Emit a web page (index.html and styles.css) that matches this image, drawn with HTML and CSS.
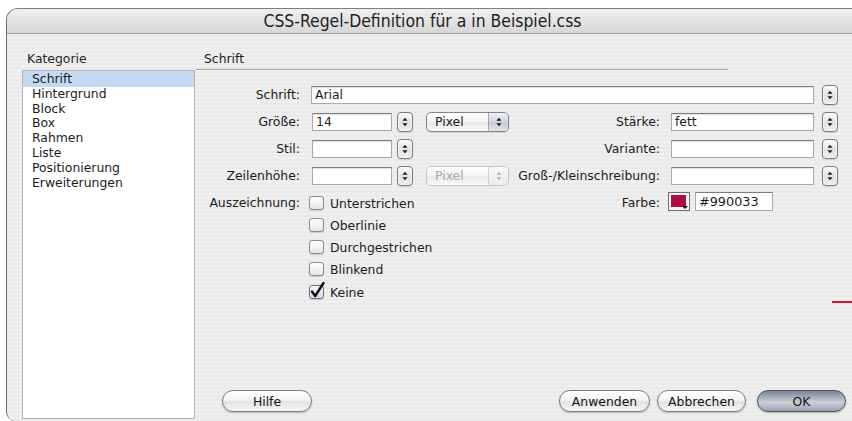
FILE: index.html
```html
<!DOCTYPE html>
<html lang="de">
<head>
<meta charset="utf-8">
<title>CSS-Regel-Definition</title>
<link rel="stylesheet" href="styles.css">
</head>
<body>
<div class="window">
  <div class="titlebar">CSS-Regel-Definition für a in Beispiel.css</div>
  <div class="content">
    <aside class="sidebar">
      <div class="caption">Kategorie</div>
      <ul class="list">
        <li class="selected">Schrift</li>
        <li>Hintergrund</li>
        <li>Block</li>
        <li>Box</li>
        <li>Rahmen</li>
        <li>Liste</li>
        <li>Positionierung</li>
        <li>Erweiterungen</li>
      </ul>
    </aside>
    <main class="panel">
      <div class="panel-title">Schrift</div>
      <div class="form">
        <!-- row 1 -->
        <div class="label c1 r1">Schrift:</div>
        <div class="field wide r1">Arial</div>
        <div class="stepper c7 r1"><svg width="6" height="10" viewBox="0 0 6 10"><path d="M3 0.8 L5.6 3.8 H0.4Z M3 9.2 L5.6 6.2 H0.4Z"/></svg></div>

        <!-- row 2 -->
        <div class="label c1 r2">Größe:</div>
        <div class="field small c2 r2">14</div>
        <div class="stepper c3 r2"><svg width="6" height="10" viewBox="0 0 6 10"><path d="M3 0.8 L5.6 3.8 H0.4Z M3 9.2 L5.6 6.2 H0.4Z"/></svg></div>
        <div class="select c4 r2"><span class="value">Pixel</span><span class="arrows"><svg width="6" height="10" viewBox="0 0 6 10"><path d="M3 0.8 L5.6 3.8 H0.4Z M3 9.2 L5.6 6.2 H0.4Z"/></svg></span></div>
        <div class="label c5 r2">Stärke:</div>
        <div class="field right c6 r2">fett</div>
        <div class="stepper c7 r2"><svg width="6" height="10" viewBox="0 0 6 10"><path d="M3 0.8 L5.6 3.8 H0.4Z M3 9.2 L5.6 6.2 H0.4Z"/></svg></div>

        <!-- row 3 -->
        <div class="label c1 r3">Stil:</div>
        <div class="field small c2 r3"></div>
        <div class="stepper c3 r3"><svg width="6" height="10" viewBox="0 0 6 10"><path d="M3 0.8 L5.6 3.8 H0.4Z M3 9.2 L5.6 6.2 H0.4Z"/></svg></div>
        <div class="label c5 r3">Variante:</div>
        <div class="field right c6 r3"></div>
        <div class="stepper c7 r3"><svg width="6" height="10" viewBox="0 0 6 10"><path d="M3 0.8 L5.6 3.8 H0.4Z M3 9.2 L5.6 6.2 H0.4Z"/></svg></div>

        <!-- row 4 -->
        <div class="label c1 r4">Zeilenhöhe:</div>
        <div class="field small c2 r4"></div>
        <div class="stepper c3 r4"><svg width="6" height="10" viewBox="0 0 6 10"><path d="M3 0.8 L5.6 3.8 H0.4Z M3 9.2 L5.6 6.2 H0.4Z"/></svg></div>
        <div class="select disabled c4 r4"><span class="value">Pixel</span><span class="arrows"><svg width="6" height="10" viewBox="0 0 6 10"><path d="M3 0.8 L5.6 3.8 H0.4Z M3 9.2 L5.6 6.2 H0.4Z"/></svg></span></div>
        <div class="label c5 r4">Groß-/Kleinschreibung:</div>
        <div class="field right c6 r4"></div>
        <div class="stepper c7 r4"><svg width="6" height="10" viewBox="0 0 6 10"><path d="M3 0.8 L5.6 3.8 H0.4Z M3 9.2 L5.6 6.2 H0.4Z"/></svg></div>

        <!-- row 5 -->
        <div class="label c1 r5 top">Auszeichnung:</div>
        <div class="checks r5">
          <label class="check"><span class="box"></span>Unterstrichen</label>
          <label class="check"><span class="box"></span>Oberlinie</label>
          <label class="check"><span class="box"></span>Durchgestrichen</label>
          <label class="check"><span class="box"></span>Blinkend</label>
          <label class="check"><span class="box checked"><svg class="tick" width="16" height="18" viewBox="0 0 16 18"><path d="M3 10.5 L6.2 15 L14.5 2"/></svg></span>Keine</label>
        </div>
        <div class="label c5 r5 top">Farbe:</div>
        <div class="color c6 r5">
          <span class="swatch"><span class="fill"></span><span class="corner"></span></span>
          <span class="hex">#990033</span>
        </div>
      </div>
      <div class="buttons">
        <button class="btn help">Hilfe</button>
        <span class="spacer"></span>
        <button class="btn apply">Anwenden</button>
        <button class="btn cancel">Abbrechen</button>
        <button class="btn ok">OK</button>
      </div>
    </main>
  </div>
</div>
<div class="red-mark"></div>
</body>
</html>
```
FILE: styles.css
```css
html, body {
  margin: 0;
}

body {
  width: 852px;
  height: 421px;
  overflow: hidden;
  position: relative;
  background: #fff;
  font-family: "DejaVu Sans", "Noto Sans", sans-serif;
  font-size: 12.4px;
  color: #1b1b1b;
}

/* dialog window, runs off the right edge */
.window {
  margin: 8px 0 0 6px;
  width: 860px;
  height: 413px;
  box-sizing: border-box;
  border-left: 1px solid #6f6f6f;
  border-top: 1px solid #7c7f84;
  border-radius: 12px 0 0 9px;
  overflow: hidden;
  display: flex;
  flex-direction: column;
  background: repeating-linear-gradient(#efefef 0 2px, #eaeaea 2px 4px);
}

.titlebar {
  height: 24px;
  flex: none;
  border-bottom: 1px solid #9c9c9c;
  background: linear-gradient(#efefef, #d7d7d7);
  display: flex;
  align-items: center;
  justify-content: center;
  padding-right: 28px;
  font-family: "DejaVu Sans Condensed", "DejaVu Sans", sans-serif;
  font-stretch: condensed;
  font-size: 17.4px;
  color: #1e1e1e;
}

.content {
  flex: 1;
  display: flex;
  min-height: 0;
}

/* category list */
.sidebar {
  width: 173px;
  flex: none;
  padding: 17px 0 2px 15px;
  display: flex;
  flex-direction: column;
}

.caption {
  line-height: 15px;
  height: 15px;
  padding-left: 5px;
  color: #2a2222;
}

.list {
  margin: 4px 0 0;
  padding: 0;
  list-style: none;
  background: #fff;
  border: 1px solid #b4b4b4;
  flex: 1;
}

.list li {
  line-height: 14.8px;
  padding-left: 9px;
}

.list li:first-child {
  padding-top: 1px;
}

.list li.selected {
  background: #c6d9f2;
}

/* right panel */
.panel {
  flex: 1;
  margin-left: 1px;
  padding: 0 20px 9px 0;
  display: flex;
  flex-direction: column;
}

.panel-title {
  width: 524px;
  padding: 17px 0 3px 8px;
  line-height: 15px;
  border-bottom: 1px solid #a4a4a4;
  box-shadow: 0 1px 0 #fbfbfb;
}

.form {
  margin-top: 11px;
  display: grid;
  grid-template-columns: 104px 92px 21px 96px 151px 154px 24px;
  grid-template-rows: repeat(4, 27px) auto;
  align-items: center;
}

.c1 { grid-column: 1; }
.c2 { grid-column: 2; }
.c3 { grid-column: 3; }
.c4 { grid-column: 4; }
.c5 { grid-column: 5; }
.c6 { grid-column: 6; }
.c7 { grid-column: 7; }
.r1 { grid-row: 1; }
.r2 { grid-row: 2; }
.r3 { grid-row: 3; }
.r4 { grid-row: 4; }
.r5 { grid-row: 5; }

.label {
  text-align: right;
  white-space: nowrap;
}

.label.top {
  align-self: start;
  line-height: 22px;
  padding-top: 3px;
}

.field {
  height: 18px;
  box-sizing: border-box;
  background: #fff;
  border: 1px solid #a9a9a9;
  border-top-color: #7d7d7d;
  box-shadow: inset 0 1px 1px rgba(0, 0, 0, 0.12);
  padding-left: 3px;
  line-height: 16px;
}

.field.wide {
  grid-column: 2 / 7;
  margin-left: 11px;
}

.field.small {
  margin-left: 12px;
}

.field.right {
  margin-left: 11px;
}

/* up/down stepper */
.stepper {
  justify-self: end;
  width: 16px;
  height: 20px;
  box-sizing: border-box;
  border: 1px solid #7a7a7a;
  border-radius: 4px;
  background: linear-gradient(#fcfcfc, #e2e2e2 55%, #eeeeee);
  box-shadow: inset 0 0 0 1px rgba(255, 255, 255, 0.5), 0 1px 1px rgba(0, 0, 0, 0.12);
  display: flex;
  align-items: center;
  justify-content: center;
}

.stepper svg path,
.select svg path {
  fill: #1e1e1e;
}

/* popup menu */
.select {
  margin-left: 13px;
  width: 83px;
  height: 20px;
  box-sizing: border-box;
  border: 1px solid #858585;
  border-radius: 5px;
  background: linear-gradient(#ffffff, #f3f3f3 50%, #e8e8e8 50%, #f8f8f8);
  box-shadow: 0 1px 1px rgba(0, 0, 0, 0.12);
  display: flex;
  overflow: hidden;
}

.select .value {
  flex: 1;
  padding-left: 8px;
  line-height: 18px;
}

.select .arrows {
  width: 19px;
  border-left: 1px solid #a8a8a8;
  background: linear-gradient(#eef0f3, #d2d6dc 50%, #c5cad1 50%, #e2e5e9);
  display: flex;
  align-items: center;
  justify-content: center;
}

.select.disabled {
  border-color: #c4c4c4;
  box-shadow: none;
  color: #a9a9a9;
}

.select.disabled .arrows {
  border-left-color: #d4d4d4;
  background: linear-gradient(#f7f7f7, #ececec);
}

.select.disabled svg path {
  fill: #b3b3b3;
}

/* check boxes */
.checks {
  grid-column: 2 / 5;
  align-self: start;
  padding-top: 3px;
  margin-left: 9px;
  display: flex;
  flex-direction: column;
}

.check {
  height: 22px;
  display: flex;
  align-items: center;
  gap: 6px;
}

.check:last-child {
  margin-top: 1px;
}

.box {
  width: 15px;
  height: 14px;
  box-sizing: border-box;
  border: 1px solid #8b8b8b;
  border-radius: 3px;
  background: linear-gradient(#ffffff, #e6e6e6);
  box-shadow: 0 1px 1px rgba(0, 0, 0, 0.15);
  position: relative;
}

.box.checked {
  background: linear-gradient(#f4f6f9, #d5dbe3);
  border-color: #6f747c;
}

.tick {
  position: absolute;
  left: -1px;
  top: -5px;
}

.tick path {
  fill: none;
  stroke: #111;
  stroke-width: 2.4;
  stroke-linecap: round;
  stroke-linejoin: round;
}

/* colour picker */
.color {
  align-self: start;
  padding-top: 3px;
  margin-left: 8px;
  display: flex;
  align-items: center;
  gap: 5px;
}

.swatch {
  width: 22px;
  height: 19px;
  box-sizing: border-box;
  border: 1px solid #6e6e6e;
  background: #f4f4f4;
  padding: 2px 3px 3px 2px;
  position: relative;
}

.swatch .fill {
  display: block;
  width: 100%;
  height: 100%;
  background: #ad0c44;
}

.swatch .corner {
  position: absolute;
  right: 1px;
  bottom: 1px;
  width: 0;
  height: 0;
  border-left: 3px solid transparent;
  border-right: 3px solid transparent;
  border-top: 3px solid #111;
}

.hex {
  width: 78px;
  height: 19px;
  box-sizing: border-box;
  background: #fff;
  border: 1px solid #a9a9a9;
  border-top-color: #7d7d7d;
  padding-left: 3px;
  line-height: 17px;
  font-size: 12.8px;
}

/* push buttons */
.buttons {
  margin-top: auto;
  padding-left: 26px;
  display: flex;
  align-items: center;
}

.spacer {
  flex: 1;
}

.btn {
  height: 22px;
  box-sizing: border-box;
  border-radius: 11px;
  border: 1px solid #7e7e7e;
  background: linear-gradient(#ffffff 0%, #f4f4f4 45%, #e3e3e3 55%, #f6f6f6 100%);
  box-shadow: 0 1px 2px rgba(0, 0, 0, 0.25);
  font-family: "DejaVu Sans", sans-serif;
  font-size: 12.4px;
  color: #141414;
  padding: 0;
}

.help { width: 90px; }
.apply { width: 91px; }
.cancel { width: 89px; margin-left: 7px; }
.ok {
  width: 89px;
  margin-left: 11px;
  border-color: #4e5561;
  background: linear-gradient(#7c8694 0%, #a9b2bd 35%, #c9cfd6 55%, #b2bac4 80%, #97a1ad 100%);
}

.red-mark {
  position: absolute;
  left: 832px;
  top: 301px;
  width: 20px;
  height: 2px;
  background: #d3123a;
}
```
